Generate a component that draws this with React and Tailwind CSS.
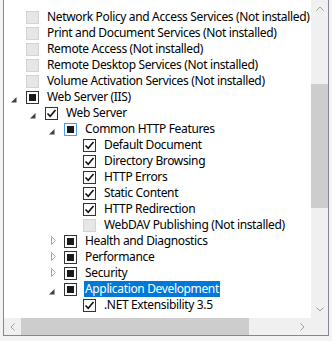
import React from "react";

const rows = [
  { level: 0, box: "off", label: "Network Policy and Access Services (Not installed)" },
  { level: 0, box: "off", label: "Print and Document Services (Not installed)" },
  { level: 0, box: "off", label: "Remote Access (Not installed)" },
  { level: 0, box: "off", label: "Remote Desktop Services (Not installed)" },
  { level: 0, box: "off", label: "Volume Activation Services (Not installed)" },
  { level: 0, box: "mixed", arrow: "open", label: "Web Server (IIS)" },
  { level: 1, box: "on", arrow: "open", label: "Web Server" },
  { level: 2, box: "mixed", arrow: "open", focus: true, label: "Common HTTP Features" },
  { level: 3, box: "on", label: "Default Document" },
  { level: 3, box: "on", label: "Directory Browsing" },
  { level: 3, box: "on", label: "HTTP Errors" },
  { level: 3, box: "on", label: "Static Content" },
  { level: 3, box: "on", label: "HTTP Redirection" },
  { level: 3, box: "off", label: "WebDAV Publishing (Not installed)" },
  { level: 2, box: "mixed", arrow: "closed", label: "Health and Diagnostics" },
  { level: 2, box: "mixed", arrow: "closed", label: "Performance" },
  { level: 2, box: "mixed", arrow: "closed", label: "Security" },
  { level: 2, box: "mixed", arrow: "open", selected: true, label: "Application Development" },
  { level: 3, box: "on", label: ".NET Extensibility 3.5" },
];

function Arrow({ kind }) {
  if (kind === "open") {
    return (
      <svg width="6" height="6" viewBox="0 0 6 6" className="ml-[7px] mt-[5px]">
        <polygon points="5.5,0 5.5,5.5 0,5.5" fill="#404040" />
      </svg>
    );
  }
  if (kind === "closed") {
    return (
      <svg width="6" height="10" viewBox="0 0 6 10" className="ml-[9px]">
        <polygon points="0.5,0.5 4.5,4.5 0.5,8.5" fill="none" stroke="#a6a6a6" />
      </svg>
    );
  }
  return null;
}

function Box({ state, focus }) {
  if (state === "off") {
    return <div className="w-[13px] h-[13px] shrink-0 border border-[#d4d4d4] bg-[#e6e6e6]" />;
  }
  return (
    <div
      className={`w-[13px] h-[13px] shrink-0 border bg-white flex items-center justify-center ${
        focus ? "border-[#4d9be8]" : "border-[#333333]"
      }`}
    >
      {state === "mixed" ? (
        <div className="w-[7px] h-[7px] bg-[#1a1a1a]" />
      ) : (
        <svg width="11" height="11" viewBox="0 0 11 11">
          <path d="M1.5 5.5 L4.2 8.2 L9.5 2" fill="none" stroke="#111" strokeWidth="1.6" />
        </svg>
      )}
    </div>
  );
}

function Chevron({ dir }) {
  const d = {
    up: "M0.5 4.5 L4 1 L7.5 4.5",
    down: "M0.5 0.5 L4 4 L7.5 0.5",
    left: "M4.5 0.5 L1 4 L4.5 7.5",
    right: "M0.5 0.5 L4 4 L0.5 7.5",
  }[dir];
  const vert = dir === "up" || dir === "down";
  return (
    <svg width={vert ? 8 : 5} height={vert ? 5 : 8} viewBox={vert ? "0 0 8 5" : "0 0 5 8"}>
      <path d={d} fill="none" stroke="#a0a0a0" strokeWidth="1" />
    </svg>
  );
}

export default function App() {
  return (
    <div
      className="w-[332px] h-[341px] bg-[#f3f3f3] pl-[3px] pr-[3px] overflow-hidden"
      style={{ fontFamily: '"Noto Sans", "Liberation Sans", sans-serif' }}
    >
      <div className="h-[336px] border-l border-r border-b border-[#828790] bg-white grid grid-cols-[1fr_17px] grid-rows-[1fr_17px]">
        <div className="overflow-hidden pt-[9px]">
          {rows.map((r, i) => (
            <div
              key={i}
              className="h-[16px] flex items-center whitespace-nowrap text-[12px] leading-[16px] tracking-[-0.35px] text-black"
              style={{ paddingLeft: r.level * 19 }}
            >
              <div className="w-[22px] h-[16px] shrink-0 flex items-center">
                <Arrow kind={r.arrow} />
              </div>
              <Box state={r.box} focus={r.focus} />
              <span
                className={`ml-[7px] px-[1px] ${r.selected ? "bg-[#0078d7] text-white" : ""}`}
              >
                {r.label}
              </span>
            </div>
          ))}
        </div>
        <div className="bg-[#f0f0f0] flex flex-col items-center">
          <div className="h-[17px] flex items-center justify-center">
            <Chevron dir="up" />
          </div>
          <div className="w-full flex-1 pt-[67px]">
            <div className="w-full h-[124px] bg-[#cdcdcd]" />
          </div>
          <div className="h-[17px] flex items-center justify-center">
            <Chevron dir="down" />
          </div>
        </div>
        <div className="bg-[#f0f0f0] flex items-center">
          <div className="w-[17px] h-[17px] flex items-center justify-center">
            <Chevron dir="left" />
          </div>
          <div className="w-[228px] h-[17px] bg-[#cdcdcd]" />
          <div className="flex-1" />
          <div className="w-[17px] h-[17px] flex items-center justify-center">
            <Chevron dir="right" />
          </div>
        </div>
        <div className="bg-[#f0f0f0]" />
      </div>
    </div>
  );
}
